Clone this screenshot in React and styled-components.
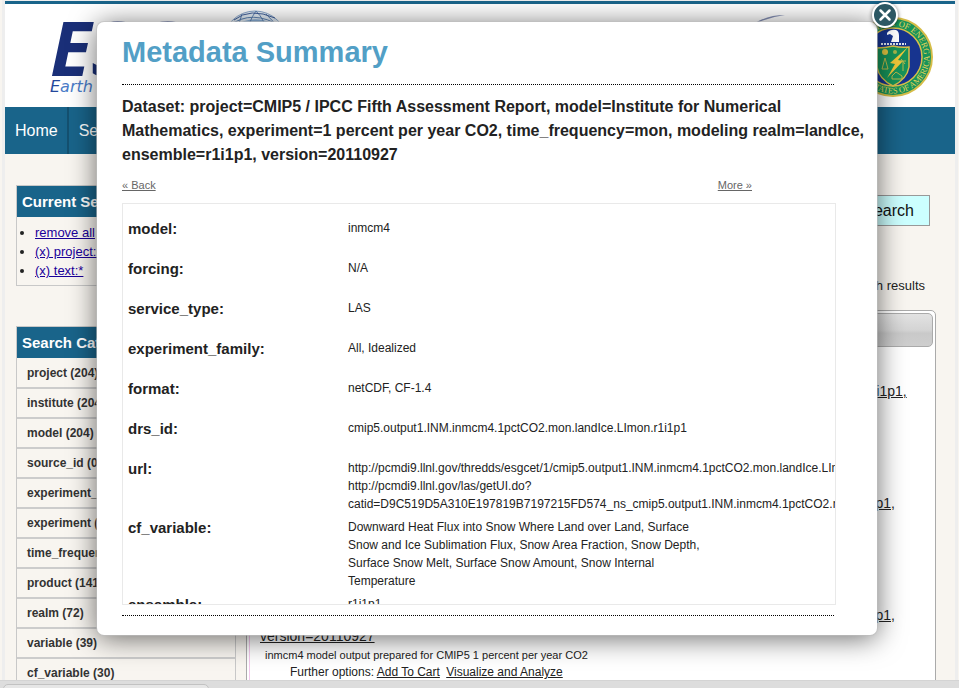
import React from "react";
import styled, { createGlobalStyle } from "styled-components";

const BLUE = "#19648a";
const CREAM = "#f8f5f0";

const GlobalStyle = createGlobalStyle`
  * { box-sizing: border-box; }
  body {
    margin: 0;
    background: ${CREAM};
    color: #222;
    font-family: "Liberation Sans", Arial, sans-serif;
    font-size: 13px;
  }
`;

const Window = styled.div`
  height: 100vh;
  overflow: hidden;
  display: flex;
  flex-direction: column;
`;

const Site = styled.div`
  flex: 1;
  min-height: 0;
  overflow: hidden;
  margin: 0 1px 0 2px;
  border: solid #eee;
  border-width: 1px 3px 0;
`;

const Masthead = styled.header`
  display: flex;
  align-items: flex-start;
  height: 106px;
  padding: 0 22px 0 45px;
  background: #fff;
  border-top: 3px solid ${BLUE};
`;

const Brand = styled.div`
  width: 172px;
  padding-top: 12px;
  white-space: nowrap;
`;

const BrandName = styled.div`
  font: italic bold 76px/62px "Open Sans", sans-serif;
  color: #1a2f78;
`;

const BrandTagline = styled.div`
  font: italic 16px/18px "DejaVu Sans", Verdana, sans-serif;
  color: #4a7cc8;

  &::first-letter { color: #24489c; }
`;

const Globe = styled.svg`
  margin-top: 6px;
`;

const Swoosh = styled.svg`
  margin: 10px 68px 0 auto;
`;

const Seal = styled.svg`
  margin-top: 12px;
  flex: none;
`;

const Nav = styled.nav`
  display: flex;
  height: 47px;
  background: ${BLUE};
`;

const NavLink = styled.a`
  padding: 0 9px 0 10px;
  border-right: 2px solid #14506f;
  color: #fff;
  font-size: 16px;
  line-height: 47px;
  text-decoration: none;
`;

const Columns = styled.div`
  display: flex;
  gap: 10px;
  padding: 31px 19px 0 11px;
`;

const Sidebar = styled.aside`
  flex: none;
  width: 220px;
  display: flex;
  flex-direction: column;
  gap: 40px;
`;

const Panel = styled.section`
  border: 1px solid #c8c8c8;
`;

const PanelTitle = styled.h2`
  margin: 0;
  padding: 0 5px;
  background: ${BLUE};
  color: #fff;
  font-size: 15px;
  line-height: 31px;
  white-space: nowrap;
`;

const Filters = styled.ul`
  margin: 0;
  padding: 6px 0 5px 18px;
  line-height: 19px;

  a { color: #1a0099; }
`;

const Category = styled.div`
  padding: 1px 10px 0;
  border-bottom: 2px solid #ccc;
  color: #333;
  font-size: 12px;
  font-weight: bold;
  line-height: 27px;

  &:first-of-type { padding-top: 2px; }
`;

const Main = styled.main`
  flex: 1;
  min-width: 0;
`;

const SearchRow = styled.form`
  display: flex;
  justify-content: flex-end;
  gap: 8px;
  padding: 10px 6px 0 0;
`;

const SearchInput = styled.input`
  width: 300px;
  border: 1px solid #999;
  font-size: 16px;
`;

const SearchButton = styled.button`
  height: 31px;
  padding: 0 15px;
  border: 1px solid #999;
  background: #cff;
  color: #111;
  font: 16px "Liberation Sans", Arial, sans-serif;
`;

const Count = styled.p`
  margin: 50px 11px 15px 0;
  line-height: 19px;
  text-align: right;
`;

const Results = styled.section`
  padding: 2px;
  border: 1px solid #aaa;
  border-radius: 5px;
  background: #fff;
`;

const ResultsBar = styled.div`
  height: 34px;
  border: 1px solid #aaa;
  border-radius: 5px;
  background: linear-gradient(#e2e2e2, #d4d4d4 50%, #c9c9c9 60%, #cecece);
`;

const ResultList = styled.div`
  padding: 13px 0 0 10px;
  border-left: 1px solid #f3c8ec;
`;

const Result = styled.article`
  height: 112px;

  a { color: #222; }
`;

const ResultTitle = styled.a`
  display: block;
  font-size: 14px;
  line-height: 21px;
  white-space: pre-line;
`;

const ResultText = styled.div`
  padding-left: 5px;
  font-size: 11px;
  line-height: 17px;
`;

const ResultOptions = styled.div`
  padding-left: 30px;
  font-size: 12px;
  line-height: 16px;

  a { margin-right: 3px; }
`;

const StatusBar = styled.footer`
  height: 8px;
  padding: 3px 3px 0;
  overflow: hidden;
  background: #ddd;
  border-top: 1px solid #d4d4d4;
`;

const StatusTab = styled.div`
  width: 206px;
  height: 16px;
  border: 1px solid #c2c2c2;
  border-radius: 5px;
  background: #e6e6e6;
`;

const Overlay = styled.div`
  position: absolute;
  inset: 0;
  padding: 22px 82px 0 97px;
`;

const Dialog = styled.section`
  position: relative;
  padding: 13px 5px 19px 25px;
  border-radius: 7px;
  background: #fff;
  box-shadow: 0 0 0 1px rgba(190, 190, 190, 0.6), 0 3px 28px rgba(0, 0, 0, 0.6);
`;

const CloseButton = styled.button`
  position: absolute;
  top: -21px;
  right: -22px;
  width: 28px;
  height: 28px;
  padding: 0;
  border: 0;
  background: none;

  svg { display: block; overflow: visible; filter: drop-shadow(0 1px 2px rgba(0, 0, 0, 0.6)); }
`;

const DialogTitle = styled.h1`
  margin: 0;
  color: #529fc6;
  font-size: 29px;
  line-height: 34px;
`;

const Rule = styled.hr`
  margin: ${(p) => (p.$top)}px 38px 0 0;
  border: 0;
  border-top: 1px dotted #000;
`;

const DatasetName = styled.h2`
  margin: 10px 0 0;
  font-size: 16px;
  line-height: 24px;
`;

const Pager = styled.div`
  display: flex;
  justify-content: space-between;
  margin: 10px 120px 10px 0;
  font-size: 11px;
  line-height: 16px;

  a { color: #666; }
`;

const Scroller = styled.div`
  height: 402px;
  margin-right: 36px;
  padding: 15px 0 0 5px;
  overflow: hidden;
  border: 1px solid #e9e9e9;
`;

const Facts = styled.table`
  width: 580px;
  table-layout: fixed;
  border-collapse: collapse;

  tr { height: 40px; }
`;

const Label = styled.th`
  width: 220px;
  padding: 0;
  vertical-align: top;
  text-align: left;
  font-size: 15px;
  line-height: 20px;
`;

const Value = styled.td`
  padding: 0 0 5px;
  vertical-align: top;
  font-size: 12px;
  line-height: 18px;
  white-space: ${(p) => (p.$lines ? "pre" : "normal")};
`;

const categories = [
  "project (204)", "institute (204)", "model (204)", "source_id (0)", "experiment_family (204)",
  "experiment (204)", "time_frequency (204)", "product (141)", "realm (72)", "variable (39)", "cf_variable (30)",
];

const results = [
  "project=CMIP5 / IPCC Fifth Assessment Report, model=Institute for Numerical Mathematics,\nexperiment=1 percent per year CO2, time_frequency=mon, modeling realm=landIce, ensemble=r10i1p1,\nversion=20110927",
  "project=CMIP5 / IPCC Fifth Assessment Report, model=Institute for Numerical Mathematics,\nexperiment=1 percent per year CO2, time_frequency=mon, modeling realm=seaIce, ensemble=r1i1p1,\nversion=20110927",
  "project=CMIP5 / IPCC Fifth Assessment Report, model=Institute for Numerical Mathematics,\nexperiment=1 percent per year CO2, time_frequency=mon, modeling realm=seaIce, ensemble=r1i1p1,\nversion=20110927",
];

const facts = [
  ["model:", "inmcm4"],
  ["forcing:", "N/A"],
  ["service_type:", "LAS"],
  ["experiment_family:", "All, Idealized"],
  ["format:", "netCDF, CF-1.4"],
  ["drs_id:", "cmip5.output1.INM.inmcm4.1pctCO2.mon.landIce.LImon.r1i1p1"],
  ["url:", "http://pcmdi9.llnl.gov/thredds/esgcet/1/cmip5.output1.INM.inmcm4.1pctCO2.mon.landIce.LImon.r1i1p1\nhttp://pcmdi9.llnl.gov/las/getUI.do?\ncatid=D9C519D5A310E197819B7197215FD574_ns_cmip5.output1.INM.inmcm4.1pctCO2.mon.landIce"],
  ["cf_variable:", "Downward Heat Flux into Snow Where Land over Land, Surface Snow and Ice Sublimation Flux, Snow Area Fraction, Snow Depth, Surface Snow Melt, Surface Snow Amount, Snow Internal Temperature"],
  ["ensemble:", "r1i1p1"],
];

function GlobeMark() {
  return (
    <Globe width="66" height="66" viewBox="0 0 66 66" fill="none" stroke="#5c82b4" aria-hidden="true">
      <circle cx="33" cy="33" r="32" fill="#e3edf6" stroke="#8da9cc" />
      <path d="M12 16 Q30 4 50 13 L56 26 Q32 12 8 30Z" fill="#8db4dc" stroke="none" />
      <path d="M7 16Q30 -2 60 17M2 27Q30 2 64 28M20 4Q12 22 16 60M34 1Q18 22 28 65M34 1Q52 18 44 64M44 4Q60 17 61 45" />
      <path d="M12 10Q28 -3 53 8" stroke="#415f99" />
    </Globe>
  );
}

function SealMark() {
  return (
    <Seal width="80" height="82" viewBox="0 0 80 82" role="img" aria-label="Department of Energy">
      <defs>
        <path id="sealTop" d="M9 41a31 31 0 0 1 62 0" />
        <path id="sealBottom" d="M3.500 41a36.500 36.500 0 0 0 73 0" />
      </defs>
      <circle cx="40" cy="41" r="39" fill="#17935a" stroke="#d6bd48" strokeWidth="2" />
      <circle cx="40" cy="41" r="29" fill="#17348f" stroke="#d9c04a" strokeWidth="1.500" />
      <g fill="#e3d45a" fontFamily="Liberation Serif" fontSize="8.500" textAnchor="middle">
        <text><textPath href="#sealTop" startOffset="50%">DEPARTMENT OF ENERGY</textPath></text>
        <text><textPath href="#sealBottom" startOffset="50%">UNITED STATES OF AMERICA</textPath></text>
      </g>
      <path d="M34 17q3-4 9-3 3 1 3 6v6h-8l2-6-3-2-3 1z" fill="#fff" />
      <path d="M28 28h25" stroke="#dfe5ee" strokeWidth="2" strokeDasharray="2 1" />
      <path d="M24 32q8 0 16-2 8 2 16 1v20q-2 12-16 19-14-7-16-19z" fill="#17935a" stroke="#d9c04a" strokeWidth="1.500" />
      <path d="M55 31 37 47l5 1-8 14 16-17-5-1z" fill="#f3c93a" />
      <circle cx="32" cy="36" r="3" fill="#e3c642" />
      <circle cx="42" cy="36" r="2" fill="#a8b94b" />
      <path d="M32 42l-3 11h6zM50 45v10M47 45h6M48 43l4 5M39 60l4-4 6 4v3H39z" fill="none" stroke="#b9b94a" />
    </Seal>
  );
}

export default function App() {
  return (
    <>
      <GlobalStyle />
      <Window>
        <Site>
          <Masthead>
            <Brand>
              <BrandName>ESG</BrandName>
              <BrandTagline>Earth System Grid</BrandTagline>
            </Brand>
            <GlobeMark />
            <Swoosh width="30" height="12" viewBox="0 0 30 12" aria-hidden="true">
              <path d="M0 9Q13 1 30 1Q15 3 2 9z" fill="#8590b5" />
            </Swoosh>
            <SealMark />
          </Masthead>
          <Nav>
            <NavLink href="#home">Home</NavLink>
            <NavLink href="#search">Search</NavLink>
          </Nav>
          <Columns>
            <Sidebar>
              <Panel>
                <PanelTitle>Current Selections</PanelTitle>
                <Filters>
                  <li><a href="#remove">remove all</a></li>
                  <li><a href="#project">(x) project:CMIP5</a></li>
                  <li><a href="#text">(x) text:*</a></li>
                </Filters>
              </Panel>
              <Panel>
                <PanelTitle>Search Categories</PanelTitle>
                {categories.map((name) => <Category key={name}>{name}</Category>)}
              </Panel>
            </Sidebar>
            <Main>
              <SearchRow>
                <SearchInput aria-label="Search text" />
                <SearchButton type="button">Search</SearchButton>
              </SearchRow>
              <Count>204 search results</Count>
              <Results>
                <ResultsBar />
                <ResultList>
                  {results.map((title, i) => (
                    <Result key={i}>
                      <ResultTitle href="#dataset">{title}</ResultTitle>
                      <ResultText>inmcm4 model output prepared for CMIP5 1 percent per year CO2</ResultText>
                      <ResultOptions>
                        Further options: <a href="#cart">Add To Cart</a> <a href="#analyze">Visualize and Analyze</a>
                      </ResultOptions>
                    </Result>
                  ))}
                </ResultList>
              </Results>
            </Main>
          </Columns>
        </Site>
        <StatusBar><StatusTab /></StatusBar>
      </Window>
      <Overlay>
        <Dialog role="dialog" aria-labelledby="dialog-title">
          <DialogTitle id="dialog-title">Metadata Summary</DialogTitle>
          <Rule $top={15} />
          <DatasetName>
            Dataset: project=CMIP5 / IPCC Fifth Assessment Report, model=Institute for Numerical Mathematics,
            experiment=1 percent per year CO2, time_frequency=mon, modeling realm=landIce, ensemble=r1i1p1,
            version=20110927
          </DatasetName>
          <Pager>
            <a href="#back">« Back</a>
            <a href="#more">More »</a>
          </Pager>
          <Scroller>
            <Facts>
              <tbody>
                {facts.map(([label, value]) => (
                  <tr key={label}>
                    <Label scope="row">{label}</Label>
                    <Value $lines={label === "url:"}>{value}</Value>
                  </tr>
                ))}
              </tbody>
            </Facts>
          </Scroller>
          <Rule $top={10} />
          <CloseButton aria-label="Close">
            <svg width="28" height="28" viewBox="0 0 28 28">
              <circle cx="14" cy="14" r="12" fill="#2c5763" stroke="#fff" strokeWidth="2" />
              <path d="M9.500 9.500l9 9M18.500 9.500l-9 9" stroke="#fff" strokeWidth="2.500" strokeLinecap="round" />
            </svg>
          </CloseButton>
        </Dialog>
      </Overlay>
    </>
  );
}
